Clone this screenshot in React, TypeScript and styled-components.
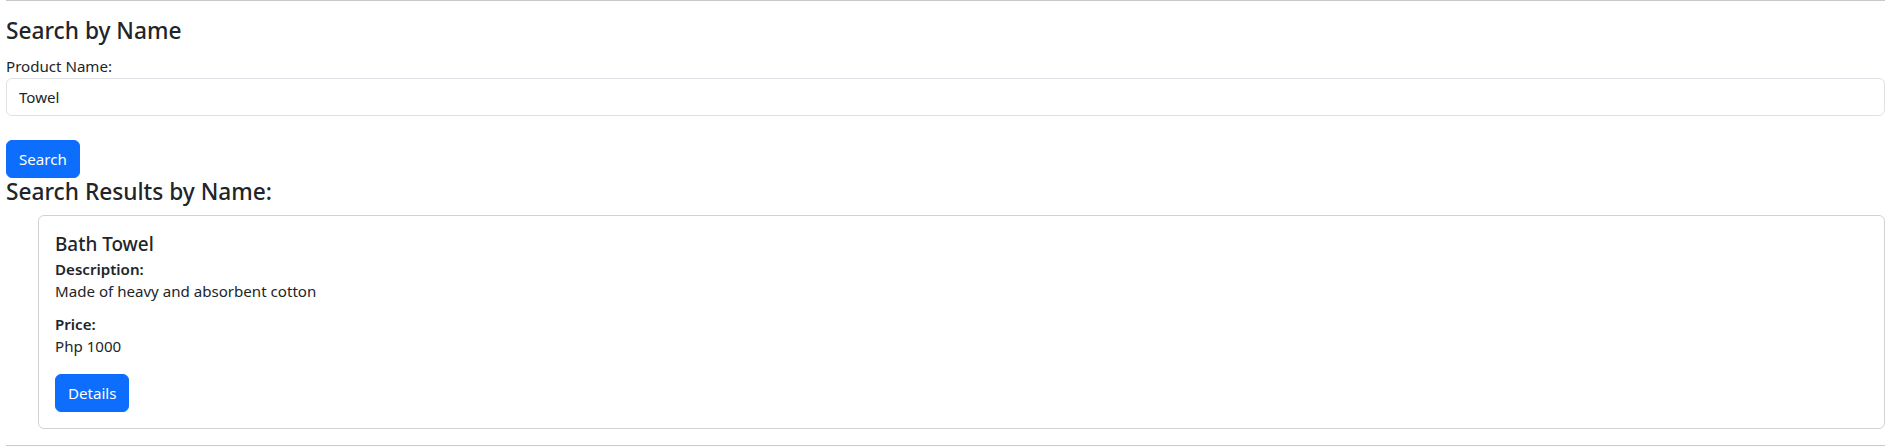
import styled, { createGlobalStyle } from "styled-components";

const GlobalStyle = createGlobalStyle`
  html, body {
    margin: 0;
    padding: 0;
    background: #fff;
  }
  body {
    font-family: "Noto Sans", "Open Sans", sans-serif;
    font-size: 15.1px;
    line-height: 24px;
    color: #212529;
  }
  *, *::before, *::after {
    box-sizing: border-box;
  }
`;

const Page = styled.div`
  padding: 0 6px;
`;

const Rule = styled.hr<{ $top?: boolean }>`
  margin: ${({ $top }) => ($top ? "0 0 16px" : "16px 0 0")};
  border: 0;
  border-top: 1px solid #c8c9ca;
  height: 0;
`;

const SectionTitle = styled.h4`
  margin: 0 0 8px;
  font-size: 22.7px;
  font-weight: 500;
  line-height: 28.8px;
`;

const Label = styled.label`
  display: block;
  line-height: 24px;
`;

const TextInput = styled.input`
  display: block;
  width: 100%;
  height: 38px;
  padding: 6px 12px;
  font: inherit;
  color: #212529;
  background: #fff;
  border: 1px solid #dee2e6;
  border-radius: 6px;
  outline: none;
`;

const Spacer = styled.div`
  height: 24px;
`;

const Button = styled.button`
  display: inline-block;
  height: 38px;
  padding: 6px 12px;
  font: inherit;
  line-height: 24px;
  color: #fff;
  background: #0d6efd;
  border: 1px solid #0d6efd;
  border-radius: 6px;
  cursor: pointer;
`;

const ButtonRow = styled.div`
  display: flex;
`;

const ResultList = styled.ul`
  margin: 0;
  padding-left: 32px;
  list-style: none;
`;

const Card = styled.li`
  border: 1px solid rgba(0, 0, 0, 0.175);
  border-radius: 6px;
  padding: 16px;
`;

const CardTitle = styled.h5`
  margin: 0 0 8px;
  font-size: 18.9px;
  font-weight: 500;
  line-height: 24px;
`;

const CardSubtitle = styled.h6`
  margin: -4px 0 0;
  font-size: 15.1px;
  font-weight: 600;
  line-height: 19.2px;
`;

const CardText = styled.p`
  margin: 0 0 16px;
`;

interface Product {
  name: string;
  description: string;
  price: number;
}

const results: Product[] = [
  {
    name: "Bath Towel",
    description: "Made of heavy and absorbent cotton",
    price: 1000,
  },
];

export default function App() {
  return (
    <>
      <GlobalStyle />
      <Page>
        <Rule $top />
        <SectionTitle>Search by Name</SectionTitle>
        <Label htmlFor="productName">Product Name:</Label>
        <TextInput id="productName" type="text" defaultValue="Towel" />
        <Spacer />
        <ButtonRow>
          <Button type="button">Search</Button>
        </ButtonRow>
        <SectionTitle>Search Results by Name:</SectionTitle>
        <ResultList>
          {results.map((product) => (
            <Card key={product.name}>
              <CardTitle>{product.name}</CardTitle>
              <CardSubtitle>Description:</CardSubtitle>
              <CardText>{product.description}</CardText>
              <CardSubtitle>Price:</CardSubtitle>
              <CardText>Php {product.price}</CardText>
              <ButtonRow>
                <Button type="button">Details</Button>
              </ButtonRow>
            </Card>
          ))}
        </ResultList>
        <Rule />
      </Page>
    </>
  );
}
